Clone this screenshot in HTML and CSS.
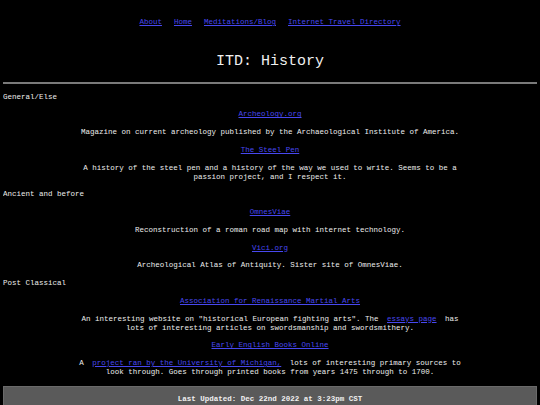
FILE: index.html
```html
<!doctype html>
<html>
<head>
	<title>ITD: History</title>
	<link rel="stylesheet" href="styles.css">
</head>
<body>
	<nav class="topnav">
		<a href="#">About</a>
		<a href="#">Home</a>
		<a href="#">Meditations/Blog</a>
		<a href="#">Internet Travel Directory</a>
	</nav>
	<h1 class="title">ITD: History</h1>
	<hr class="rule">

	<section class="group">
		<h2 class="group-name">General/Else</h2>
		<div class="entry">
			<a class="site" href="#">Archeology.org</a>
			<p>Magazine on current archeology published by the Archaeological Institute of America.</p>
		</div>
		<div class="entry">
			<a class="site" href="#">The Steel Pen</a>
			<p>A history of the steel pen and a history of the way we used to write. Seems to be a passion project, and I respect it.</p>
		</div>
	</section>

	<section class="group">
		<h2 class="group-name">Ancient and before</h2>
		<div class="entry">
			<a class="site" href="#">OmnesViae</a>
			<p>Reconstruction of a roman road map with internet technology.</p>
		</div>
		<div class="entry">
			<a class="site" href="#">Vici.org</a>
			<p>Archeological Atlas of Antiquity. Sister site of OmnesViae.</p>
		</div>
	</section>

	<section class="group">
		<h2 class="group-name">Post Classical</h2>
		<div class="entry">
			<a class="site" href="#">Association for Renaissance Martial Arts</a>
			<p>An interesting website on "historical European fighting arts". The <a class="inline" href="#">essays page</a> has lots of interesting articles on swordsmanship and swordsmithery.</p>
		</div>
		<div class="entry">
			<a class="site" href="#">Early English Books Online</a>
			<p>A <a class="inline" href="#">project ran by the University of Michigan,</a> lots of interesting primary sources to look through. Goes through printed books from years 1475 through to 1700.</p>
		</div>
	</section>

	<footer class="footer">Last Updated: Dec 22nd 2022 at 3:23pm CST</footer>
</body>
</html>
```

FILE: styles.css
```css
html{
	background:#000;
}
body{
	margin:0 3px;
	background:#000;
	color:#ececec;
	font-family:"Liberation Mono", "DejaVu Sans Mono", monospace;
	font-size:7.5px;
	line-height:9px;
}
a{
	color:#4848f0;
}
.topnav{
	display:flex;
	justify-content:center;
	gap:12px;
	padding-top:18px;
}
.title{
	margin:26px 0 0;
	text-align:center;
	font-size:15px;
	line-height:18px;
	font-weight:normal;
	color:#f0f0f0;
}
.rule{
	margin:11px 0 0;
	border:0;
	height:2px;
	background:#7a7a7a;
}
.group-name{
	margin:8.5px 0 0;
	font-size:7.5px;
	line-height:9px;
	font-weight:normal;
}
.entry{
	text-align:center;
	margin-top:8.75px;
}
.entry p{
	margin:8.75px auto 0;
	max-width:392px;
}
.group + .group .group-name{
	margin-top:8.75px;
}
.inline{
	margin:0 4px;
}
.footer{
	margin-top:8.75px;
	height:30px;
	padding-top:8px;
	box-sizing:border-box;
	background:#5a5a5a;
	border:1px solid #6a6a6a;
	text-align:center;
	font-weight:bold;
	color:#f0f0f0;
}
```
